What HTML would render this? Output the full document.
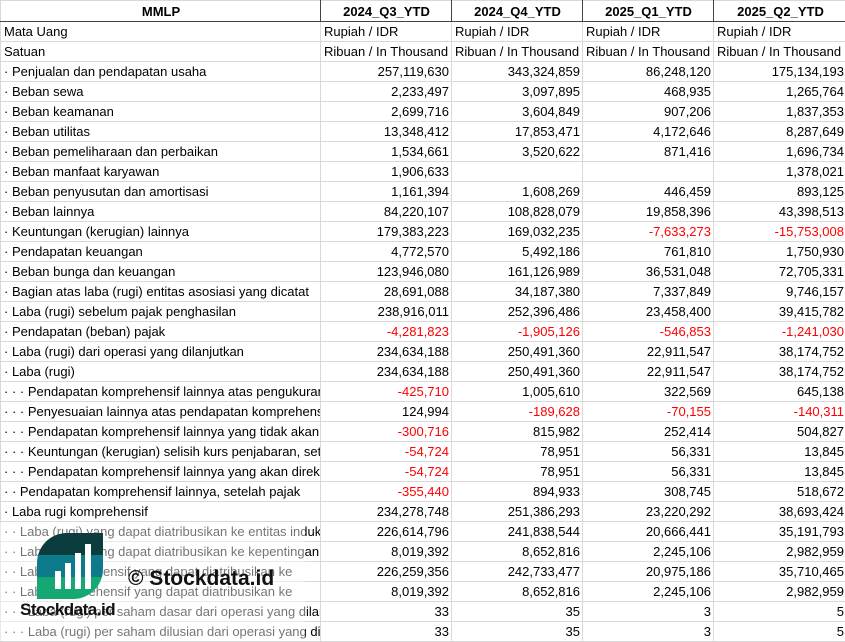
<!DOCTYPE html>
<html><head><meta charset="utf-8"><style>
body{margin:0;width:845px;height:641px;overflow:hidden;background:#fff;font-family:"Liberation Sans",sans-serif;font-size:13px;color:#000;position:relative}
table{border-collapse:collapse;table-layout:fixed;position:absolute;left:0;top:0;width:846px}
td{height:19px;padding:0 2px 0 3px;border:1px solid #d9d9d9;white-space:nowrap;overflow:hidden;line-height:19px;text-overflow:clip}
td.n{text-align:right}
tr.h td{font-weight:bold;text-align:center;border-bottom:1px solid #444;border-right:1px solid #444;height:20px}
.r{color:#f00}
</style></head><body>
<table>
<colgroup><col style="width:320px"><col style="width:131px"><col style="width:131px"><col style="width:131px"><col style="width:133px"></colgroup>
<tr class="h"><td>MMLP</td><td>2024_Q3_YTD</td><td>2024_Q4_YTD</td><td>2025_Q1_YTD</td><td>2025_Q2_YTD</td></tr>
<tr><td>Mata Uang</td><td>Rupiah / IDR</td><td>Rupiah / IDR</td><td>Rupiah / IDR</td><td>Rupiah / IDR</td></tr>
<tr><td>Satuan</td><td>Ribuan / In Thousand</td><td>Ribuan / In Thousand</td><td>Ribuan / In Thousand</td><td>Ribuan / In Thousand</td></tr>
<tr><td>· Penjualan dan pendapatan usaha</td><td class="n">257,119,630</td><td class="n">343,324,859</td><td class="n">86,248,120</td><td class="n">175,134,193</td></tr>
<tr><td>· Beban sewa</td><td class="n">2,233,497</td><td class="n">3,097,895</td><td class="n">468,935</td><td class="n">1,265,764</td></tr>
<tr><td>· Beban keamanan</td><td class="n">2,699,716</td><td class="n">3,604,849</td><td class="n">907,206</td><td class="n">1,837,353</td></tr>
<tr><td>· Beban utilitas</td><td class="n">13,348,412</td><td class="n">17,853,471</td><td class="n">4,172,646</td><td class="n">8,287,649</td></tr>
<tr><td>· Beban pemeliharaan dan perbaikan</td><td class="n">1,534,661</td><td class="n">3,520,622</td><td class="n">871,416</td><td class="n">1,696,734</td></tr>
<tr><td>· Beban manfaat karyawan</td><td class="n">1,906,633</td><td class="n"></td><td class="n"></td><td class="n">1,378,021</td></tr>
<tr><td>· Beban penyusutan dan amortisasi</td><td class="n">1,161,394</td><td class="n">1,608,269</td><td class="n">446,459</td><td class="n">893,125</td></tr>
<tr><td>· Beban lainnya</td><td class="n">84,220,107</td><td class="n">108,828,079</td><td class="n">19,858,396</td><td class="n">43,398,513</td></tr>
<tr><td>· Keuntungan (kerugian) lainnya</td><td class="n">179,383,223</td><td class="n">169,032,235</td><td class="n r">-7,633,273</td><td class="n r">-15,753,008</td></tr>
<tr><td>· Pendapatan keuangan</td><td class="n">4,772,570</td><td class="n">5,492,186</td><td class="n">761,810</td><td class="n">1,750,930</td></tr>
<tr><td>· Beban bunga dan keuangan</td><td class="n">123,946,080</td><td class="n">161,126,989</td><td class="n">36,531,048</td><td class="n">72,705,331</td></tr>
<tr><td>· Bagian atas laba (rugi) entitas asosiasi yang dicatat</td><td class="n">28,691,088</td><td class="n">34,187,380</td><td class="n">7,337,849</td><td class="n">9,746,157</td></tr>
<tr><td>· Laba (rugi) sebelum pajak penghasilan</td><td class="n">238,916,011</td><td class="n">252,396,486</td><td class="n">23,458,400</td><td class="n">39,415,782</td></tr>
<tr><td>· Pendapatan (beban) pajak</td><td class="n r">-4,281,823</td><td class="n r">-1,905,126</td><td class="n r">-546,853</td><td class="n r">-1,241,030</td></tr>
<tr><td>· Laba (rugi) dari operasi yang dilanjutkan</td><td class="n">234,634,188</td><td class="n">250,491,360</td><td class="n">22,911,547</td><td class="n">38,174,752</td></tr>
<tr><td>· Laba (rugi)</td><td class="n">234,634,188</td><td class="n">250,491,360</td><td class="n">22,911,547</td><td class="n">38,174,752</td></tr>
<tr><td>· · · Pendapatan komprehensif lainnya atas pengukuran</td><td class="n r">-425,710</td><td class="n">1,005,610</td><td class="n">322,569</td><td class="n">645,138</td></tr>
<tr><td>· · · Penyesuaian lainnya atas pendapatan komprehensif</td><td class="n">124,994</td><td class="n r">-189,628</td><td class="n r">-70,155</td><td class="n r">-140,311</td></tr>
<tr><td>· · · Pendapatan komprehensif lainnya yang tidak akan</td><td class="n r">-300,716</td><td class="n">815,982</td><td class="n">252,414</td><td class="n">504,827</td></tr>
<tr><td>· · · Keuntungan (kerugian) selisih kurs penjabaran, setelah</td><td class="n r">-54,724</td><td class="n">78,951</td><td class="n">56,331</td><td class="n">13,845</td></tr>
<tr><td>· · · Pendapatan komprehensif lainnya yang akan direklasifikasi</td><td class="n r">-54,724</td><td class="n">78,951</td><td class="n">56,331</td><td class="n">13,845</td></tr>
<tr><td>· · Pendapatan komprehensif lainnya, setelah pajak</td><td class="n r">-355,440</td><td class="n">894,933</td><td class="n">308,745</td><td class="n">518,672</td></tr>
<tr><td>· Laba rugi komprehensif</td><td class="n">234,278,748</td><td class="n">251,386,293</td><td class="n">23,220,292</td><td class="n">38,693,424</td></tr>
<tr><td>· · Laba (rugi) yang dapat diatribusikan ke entitas induk</td><td class="n">226,614,796</td><td class="n">241,838,544</td><td class="n">20,666,441</td><td class="n">35,191,793</td></tr>
<tr><td>· · Laba (rugi) yang dapat diatribusikan ke kepentingan</td><td class="n">8,019,392</td><td class="n">8,652,816</td><td class="n">2,245,106</td><td class="n">2,982,959</td></tr>
<tr><td>· · Laba komprehensif yang dapat diatribusikan ke</td><td class="n">226,259,356</td><td class="n">242,733,477</td><td class="n">20,975,186</td><td class="n">35,710,465</td></tr>
<tr><td>· · Laba komprehensif yang dapat diatribusikan ke</td><td class="n">8,019,392</td><td class="n">8,652,816</td><td class="n">2,245,106</td><td class="n">2,982,959</td></tr>
<tr><td>· · · Laba (rugi) per saham dasar dari operasi yang dilanjutkan</td><td class="n">33</td><td class="n">35</td><td class="n">3</td><td class="n">5</td></tr>
<tr><td>· · · Laba (rugi) per saham dilusian dari operasi yang dilanjutkan</td><td class="n">33</td><td class="n">35</td><td class="n">3</td><td class="n">5</td></tr>
</table>
<div style="position:absolute;left:0;top:522px;width:305px;height:119px;background:rgba(255,255,255,0.45)"></div>
<svg style="position:absolute;left:37px;top:533px" width="66" height="66" viewBox="0 0 66 66">
<defs><clipPath id="c"><path d="M30 0H66V36A30 30 0 0 1 36 66H0V30A30 30 0 0 1 30 0Z"/></clipPath></defs>
<g clip-path="url(#c)"><rect width="66" height="22" fill="#0b3c3e"/><rect y="22" width="66" height="22" fill="#0d7b8c"/><rect y="44" width="66" height="22" fill="#15a872"/></g>
<rect x="18" y="38" width="6" height="18" fill="#fff"/><rect x="28" y="30" width="6" height="26" fill="#fff"/><rect x="38" y="20" width="6" height="36" fill="#fff"/><rect x="48" y="11" width="6" height="45" fill="#fff"/>
</svg>
<div style="position:absolute;left:20px;top:600px;font-weight:bold;font-size:17px;color:#111;letter-spacing:-0.5px">Stockdata.id</div>
<div style="position:absolute;left:128px;top:567px;font-weight:bold;font-size:21px;color:#111">© Stockdata.id</div>
</body></html>
